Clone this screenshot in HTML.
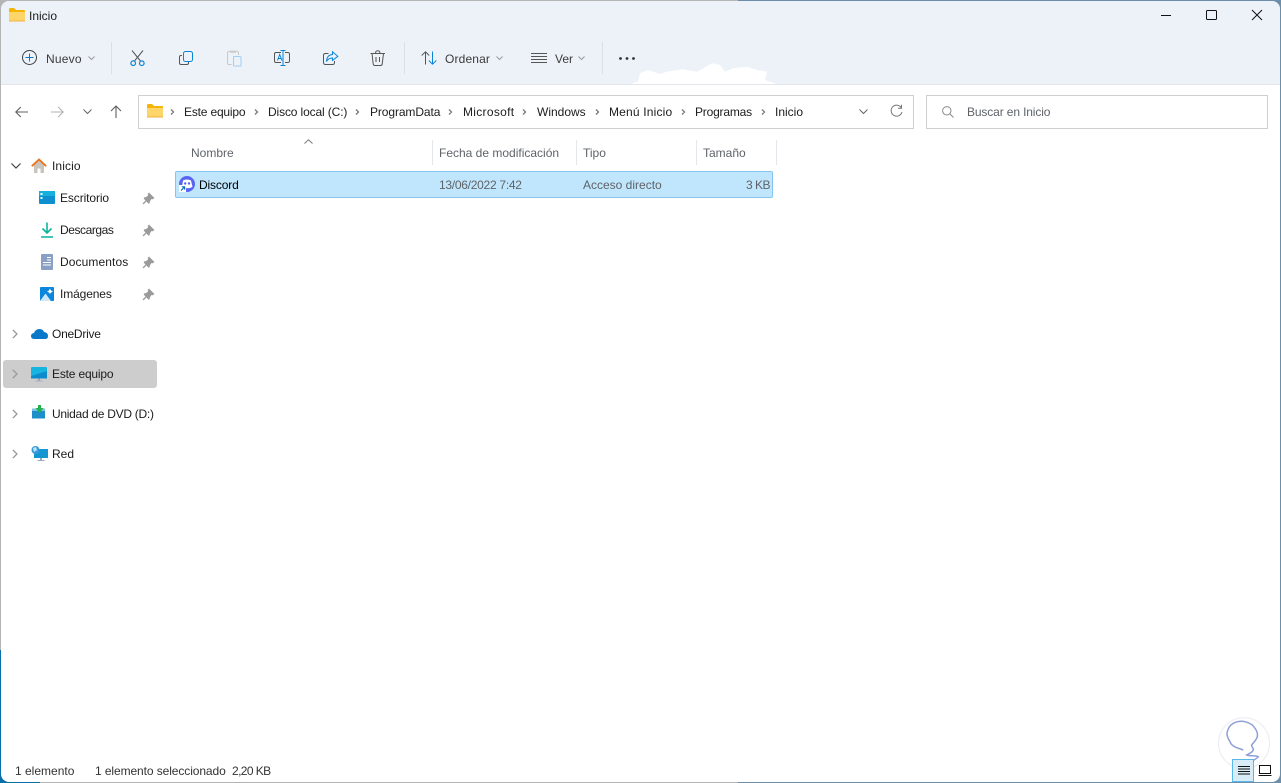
<!DOCTYPE html>
<html lang="es"><head><meta charset="utf-8"><title>Inicio</title>
<style>
html,body{margin:0;padding:0;width:1281px;height:783px;overflow:hidden;background:#0a6ea8}
*{box-sizing:border-box}
#bgtop{position:absolute;left:0;top:0;width:1281px;height:783px;background:linear-gradient(90deg,#b4b4b4 0,#b4b4b4 738px,#6b8fab 738px)}
#bgl{position:absolute;left:0;top:650px;width:40px;height:133px;background:#0a6ea8}
#win{position:absolute;left:1px;top:1px;width:1279px;height:781px;background:#fff;border-radius:8px;overflow:hidden}
#head{position:absolute;left:0;top:0;width:1279px;height:84px;background:#edf2f9;border-bottom:1px solid #e2e5ea}
.t{position:absolute;font:12px/16px "Liberation Sans",sans-serif;color:#1c1c1c;white-space:nowrap}
.g{color:#5f6368}
.s{position:absolute;background:#dcdfe4;width:1px}
svg{position:absolute;overflow:visible}
.box{position:absolute;border:1px solid #cfcfcf;background:#fff;height:34px;top:95px}
.h{position:absolute;width:1px;background:#e3e7eb;top:140px;height:25px}
</style></head><body>
<div id="bgtop"></div><div id="bgl"></div>
<div id="win"></div>
<div id="head" style="left:1px;top:1px;position:absolute;border-radius:8px 8px 0 0"></div>

<!-- title -->
<svg style="left:9px;top:8px" width="16" height="14" viewBox="0 0 16 14"><path d="M0 1.5Q0 0 1.5 0H5L7 2H15Q16 2 16 3V4H0Z" fill="#f5b400"/><path d="M0 4H16V12.5Q16 13.5 15 13.5H1Q0 13.5 0 12.5Z" fill="#fdd568"/><path d="M0 12.5H16V13.5H0Z" fill="#f4b13a"/></svg>
<div class="t" style="left:29px;top:8px">Inicio</div>

<!-- caption buttons -->
<svg style="left:1161px;top:9px" width="110" height="14" fill="none" stroke="#111" stroke-width="1"><path d="M0 6.5H10"/><rect x="45.5" y="1.5" width="10" height="9" rx="1"/><path d="M91 1L101 11M101 1L91 11"/></svg>

<!-- toolbar -->
<svg style="left:22px;top:50px" width="16" height="16" fill="none" stroke="#3c4043"><circle cx="7.5" cy="7.5" r="7"/><path d="M7.5 3.5V11.5M3.5 7.5H11.5" stroke="#0a78c8"/></svg>
<div class="t" style="left:46px;top:51px;color:#3b3b3b;letter-spacing:.2px">Nuevo</div>
<svg style="left:88px;top:56px" width="8" height="5" fill="none" stroke="#9a9a9a"><path d="M.5.5L3.5 3.5L6.5.5"/></svg>
<div class="s" style="left:111px;top:42px;height:32px"></div>
<!-- cut -->
<svg style="left:130px;top:50px" width="16" height="17" fill="none"><path d="M2 0.5L10.5 11M13 0.5L4.5 11" stroke="#555"/><circle cx="3.2" cy="13.2" r="2.3" stroke="#0a84d6" stroke-width="1.2"/><circle cx="11.8" cy="13.2" r="2.3" stroke="#0a84d6" stroke-width="1.2"/></svg>
<!-- copy -->
<svg style="left:179px;top:51px" width="15" height="15" fill="none"><path d="M3 4.5H2Q.5 4.5.5 6V12Q.5 13.5 2 13.5H8Q9.5 13.5 9.5 12V11" stroke="#555"/><rect x="4.5" y="0.5" width="9" height="10" rx="2" stroke="#0a84d6"/></svg>
<!-- paste -->
<svg style="left:227px;top:50px" width="15" height="17" fill="none"><path d="M4.5 14.5H2Q.5 14.5.5 13V3Q.5 1.5 2 1.5H10Q11.5 1.5 11.5 3V5" stroke="#c8c8c8"/><rect x="3" y="0.5" width="6" height="2.5" fill="#d0d0d0"/><rect x="6.5" y="6.5" width="7.5" height="9.5" rx="1" stroke="#9fd0f3"/></svg>
<!-- rename -->
<svg style="left:274px;top:50px" width="17" height="17" fill="none"><path d="M7 2.5H2Q.5 2.5.5 4V11Q.5 12.5 2 12.5H7M11 2.5H13.5Q15.5 2.5 15.5 4V11Q15.5 12.5 13.5 12.5H11" stroke="#555"/><path d="M9 .5V15.5M6.5.5H11.5M6.5 15.5H11.5" stroke="#0a84d6"/><path d="M3.5 10.5L5.7 4.5L8 10.5M4.3 8.5H7.2" stroke="#0a84d6"/></svg>
<!-- share -->
<svg style="left:323px;top:51px" width="16" height="15" fill="none"><path d="M5.5 2.5H2.5Q.5 2.5.5 4.5V11.5Q.5 13.5 2.5 13.5H9.5Q11.5 13.5 11.5 11.5V10" stroke="#555"/><path d="M9.5 .8L14.8 5.3L9.5 9.5V7Q5.5 7 3.5 10.5Q3.8 4 9.5 3.5Z" stroke="#0a84d6"/></svg>
<!-- delete -->
<svg style="left:370px;top:50px" width="16" height="17" fill="none" stroke="#555"><path d="M.5 3.5H15M5.5 3.5Q5.5 .8 7.8 .8Q10 .8 10 3.5M2 3.5L3.2 14Q3.4 15.5 5 15.5H10.5Q12 15.5 12.2 14L13.5 3.5M6 7V12M9.5 7V12"/></svg>
<div class="s" style="left:404px;top:42px;height:32px"></div>
<!-- sort -->
<svg style="left:421px;top:51px" width="17" height="14" fill="none"><path d="M4.5 13.5V.8M.7 4.5L4.5.8L8.2 4.5" stroke="#555"/><path d="M11.5 .5V13M7.8 9.5L11.5 13.2L15.3 9.5" stroke="#0a84d6"/></svg>
<div class="t" style="left:445px;top:51px;color:#3b3b3b;letter-spacing:.15px">Ordenar</div>
<svg style="left:496px;top:56px" width="8" height="5" fill="none" stroke="#9a9a9a"><path d="M.5.5L3.5 3.5L6.5.5"/></svg>
<svg style="left:531px;top:53px" width="16" height="10" fill="none" stroke="#555"><path d="M0 .5H16M0 3.5H16M0 6.5H16M0 9.5H16"/></svg>
<div class="t" style="left:555px;top:51px;color:#3b3b3b">Ver</div>
<svg style="left:578px;top:56px" width="8" height="5" fill="none" stroke="#9a9a9a"><path d="M.5.5L3.5 3.5L6.5.5"/></svg>
<div class="s" style="left:602px;top:42px;height:32px"></div>
<svg style="left:619px;top:57px" width="17" height="4" fill="#333"><circle cx="1.5" cy="1.5" r="1.4"/><circle cx="8" cy="1.5" r="1.4"/><circle cx="14.5" cy="1.5" r="1.4"/></svg>
<!-- white smudge -->
<svg style="left:630px;top:63px" width="147" height="21"><path d="M0 21L8 18.7L10 10L18 7L30 11L37 8.7L53 6.3L67 8.7L82 .3L90 2L95 8.7L103 5.3L117 3.7L127 7L137 8.7L135 17L147 21Z" fill="#fff"/></svg>

<!-- nav -->
<svg style="left:15px;top:106px" width="14" height="12" fill="none" stroke="#5f5f5f" stroke-width="1.1"><path d="M13 6H.8M5.8 1L.8 6L5.8 11"/></svg>
<svg style="left:50px;top:106px" width="14" height="12" fill="none" stroke="#b3b3b3" stroke-width="1.1"><path d="M1 6H13.2M8.2 1L13.2 6L8.2 11"/></svg>
<svg style="left:83px;top:109px" width="9" height="6" fill="none" stroke="#666"><path d="M.5.5L4.5 4.5L8.5.5"/></svg>
<svg style="left:110px;top:105px" width="12" height="13" fill="none" stroke="#5f5f5f" stroke-width="1.1"><path d="M6 13V1M1 6L6 1L11 6"/></svg>

<div class="box" style="left:138px;width:776px"></div>
<svg style="left:147px;top:104px" width="16" height="14" viewBox="0 0 16 14"><path d="M0 1.5Q0 0 1.5 0H5L7 2H15Q16 2 16 3V4H0Z" fill="#f5b400"/><path d="M0 4H16V12.5Q16 13.5 15 13.5H1Q0 13.5 0 12.5Z" fill="#fdd568"/><path d="M0 12.5H16V13.5H0Z" fill="#f4b13a"/></svg>
<svg style="left:170px;top:108px" width="640" height="9" fill="none" stroke="#777" stroke-width="1.3"><path d="M1 1.5L3.5 4L1 6.5M85 1.5L87.5 4L85 6.5M186 1.5L188.5 4L186 6.5M279 1.5L281.5 4L279 6.5M353 1.5L355.5 4L353 6.5M426 1.5L428.5 4L426 6.5M512 1.5L514.5 4L512 6.5M592 1.5L594.5 4L592 6.5"/></svg>
<div class="t" style="left:184px;top:104px;letter-spacing:-.18px">Este equipo</div>
<div class="t" style="left:268px;top:104px;letter-spacing:-.13px">Disco local (C:)</div>
<div class="t" style="left:370px;top:104px;letter-spacing:-.1px">ProgramData</div>
<div class="t" style="left:463px;top:104px;letter-spacing:.3px">Microsoft</div>
<div class="t" style="left:537px;top:104px">Windows</div>
<div class="t" style="left:609px;top:104px;letter-spacing:.18px">Menú Inicio</div>
<div class="t" style="left:695px;top:104px;letter-spacing:-.2px">Programas</div>
<div class="t" style="left:775px;top:104px">Inicio</div>
<svg style="left:859px;top:109px" width="9" height="6" fill="none" stroke="#666"><path d="M.5.5L4.5 4.5L8.5.5"/></svg>
<svg style="left:890px;top:104px" width="13" height="14" fill="none" stroke="#777"><path d="M11.5 4A5.5 5.5 0 1 0 12 8"/><path d="M11.5.8V4.3H8" /></svg>

<div class="box" style="left:926px;width:342px"></div>
<svg style="left:942px;top:106px" width="12" height="12" fill="none" stroke="#8a8a8a"><circle cx="4.8" cy="4.8" r="4.2"/><path d="M8 8L11.5 11.5"/></svg>
<div class="t g" style="left:967px;top:104px;letter-spacing:-.13px">Buscar en Inicio</div>

<!-- sidebar -->
<svg style="left:11px;top:163px" width="10" height="6" fill="none" stroke="#444" stroke-width="1.2"><path d="M.5.5L5 5L9.5.5"/></svg>
<svg style="left:31px;top:158px" width="16" height="16"><path d="M3 7L8 2.5L13 7V15H9.5V10.5H6.5V15H3Z" fill="#c9c4bd"/><path d="M.8 8.2L8 1.5L15.2 8.2" fill="none" stroke="#e8731a" stroke-width="1.8"/></svg>
<div class="t" style="left:52px;top:158px;letter-spacing:.1px">Inicio</div>

<svg style="left:39px;top:191px" width="16" height="13"><rect width="16" height="13" rx="1" fill="#0f8fd0"/><path d="M0 0H16V5H0Z" fill="#16b0dc"/><rect x="1.5" y="2" width="2" height="2" fill="#fff"/><rect x="1.5" y="6" width="2" height="2" fill="#dff"/></svg>
<div class="t" style="left:60px;top:190px;letter-spacing:-.1px">Escritorio</div>
<svg style="left:41px;top:222px" width="12" height="16" fill="none" stroke="#0db39a" stroke-width="1.6"><path d="M6 .5V11M1.5 6.5L6 11L10.5 6.5M0 15H12"/></svg>
<div class="t" style="left:60px;top:222px;letter-spacing:-.44px">Descargas</div>
<svg style="left:41px;top:254px" width="12" height="16"><rect width="12" height="16" rx="1" fill="#8a9fc4"/><path d="M6 3H10V4H6ZM6 5.5H10V6.5H6ZM2 8H10V9H2ZM2 10.5H10V11.5H2Z" fill="#fff"/></svg>
<div class="t" style="left:60px;top:254px;letter-spacing:.1px">Documentos</div>
<svg style="left:40px;top:287px" width="14" height="14"><rect width="14" height="14" rx="1" fill="#0a86dc"/><path d="M0 14L5.5 6.5L11 14Z" fill="#cfe9fb"/><path d="M10 1.5L11 3.5L13 4.5L11 5.5L10 7L9 5.5L7 4.5L9 3.5Z" fill="#fff"/></svg>
<div class="t" style="left:60px;top:286px;letter-spacing:-.12px">Imágenes</div>
<svg style="left:143px;top:193px" width="11" height="108" fill="#9a9a9a" stroke="#9a9a9a" stroke-width=".6"><g id="p"><path d="M6 0L11 5L9.5 6L8.5 5.5L6.5 8.5L6.5 10L5.5 10.2L3.5 8L.5 11L0 10.5L3 7.5L1 5.5L1.5 4.5H3L5.5 2.5L5 1Z"/></g><use href="#p" y="32"/><use href="#p" y="64"/><use href="#p" y="96"/></svg>

<svg style="left:12px;top:329px" width="6" height="10" fill="none" stroke="#9a9a9a" stroke-width="1.3"><path d="M.8.8L5 5L.8 9.2"/></svg>
<svg style="left:31px;top:328px" width="17" height="11"><path d="M3.5 11Q0 11 0 8Q0 5.5 3 5Q4.5 1 8.5 1Q12 1 13 4Q17 4.5 17 8Q17 11 14 11Z" fill="#0a78c8"/></svg>
<div class="t" style="left:52px;top:326px;letter-spacing:-.25px">OneDrive</div>

<div style="position:absolute;left:3px;top:360px;width:154px;height:28px;background:#cdcdcd;border-radius:3px"></div>
<svg style="left:12px;top:369px" width="6" height="10" fill="none" stroke="#9a9a9a" stroke-width="1.3"><path d="M.8.8L5 5L.8 9.2"/></svg>
<svg style="left:31px;top:367px" width="16" height="15"><rect width="16" height="11.5" rx="1" fill="#18b4e0"/><path d="M0 9L16 4V11.5H0Z" fill="#0c8ccc"/><rect x="7" y="11.5" width="2" height="2" fill="#9ab"/><rect x="4.5" y="13.5" width="7" height="1" fill="#aab"/></svg>
<div class="t" style="left:52px;top:366px;letter-spacing:-.18px">Este equipo</div>

<svg style="left:12px;top:409px" width="6" height="10" fill="none" stroke="#9a9a9a" stroke-width="1.3"><path d="M.8.8L5 5L.8 9.2"/></svg>
<svg style="left:32px;top:405px" width="14" height="14"><rect y="3.5" width="13" height="10" fill="#1c8ec8"/><path d="M0 3.5H13V6H0Z" fill="#7cc0e4"/><path d="M6 0H9V3H11.5L7.5 8L3.5 3H6Z" fill="#22b24c"/></svg>
<div class="t" style="left:52px;top:406px;letter-spacing:-.28px">Unidad de DVD (D:)</div>

<svg style="left:12px;top:449px" width="6" height="10" fill="none" stroke="#9a9a9a" stroke-width="1.3"><path d="M.8.8L5 5L.8 9.2"/></svg>
<svg style="left:31px;top:446px" width="17" height="16"><rect x="3" y="3" width="14" height="9" fill="#1496d2"/><circle cx="4.5" cy="4" r="4" fill="#3a9bd8"/><path d="M2 2L5 1L6 4L3 6Z" fill="#bfe4f5"/><rect x="9" y="12" width="2" height="2" fill="#9ab"/><rect x="6.5" y="14" width="7" height="1" fill="#9ab"/></svg>
<div class="t" style="left:52px;top:446px">Red</div>

<!-- columns -->
<div class="t g" style="left:191px;top:145px">Nombre</div>
<svg style="left:304px;top:139px" width="9" height="6" fill="none" stroke="#777"><path d="M.5 4.5L4.5.8L8.5 4.5"/></svg>
<div class="h" style="left:432px"></div>
<div class="t g" style="left:439px;top:145px">Fecha de modificación</div>
<div class="h" style="left:576px"></div>
<div class="t g" style="left:583px;top:145px">Tipo</div>
<div class="h" style="left:696px"></div>
<div class="t g" style="left:703px;top:145px">Tamaño</div>
<div class="h" style="left:776px"></div>

<!-- row -->
<div style="position:absolute;left:175px;top:171px;width:598px;height:27px;background:#c0e6fd;border:1px solid #84c4ee;border-radius:2px"></div>
<svg style="left:178px;top:176px" width="17" height="17"><circle cx="9" cy="8" r="8" fill="#5865f2"/><path d="M5 4.5Q9 2.5 13 4.5L14.5 11Q9 13.5 4 11Z" fill="#fff"/><circle cx="7.2" cy="7.5" r="1.2" fill="#5865f2"/><circle cx="11" cy="7.5" r="1.2" fill="#5865f2"/><rect x="1" y="9" width="7" height="7" fill="#fff"/><path d="M3 14.5L6.3 11.2M3.8 10.8H6.6V13.6" fill="none" stroke="#0a6fc2" stroke-width="1.2"/></svg>
<div class="t" style="left:199px;top:177px;color:#000;letter-spacing:-.15px">Discord</div>
<div class="t g" style="left:439px;top:177px;letter-spacing:-.27px">13/06/2022 7:42</div>
<div class="t g" style="left:583px;top:177px">Acceso directo</div>
<div class="t g" style="left:746px;top:177px;letter-spacing:-.5px">3 KB</div>

<!-- status -->
<div class="t" style="left:15px;top:763px;color:#333">1 elemento</div>
<div class="t" style="left:95px;top:763px;color:#333;letter-spacing:-.09px">1 elemento seleccionado</div>
<div class="t" style="left:232px;top:763px;color:#333;letter-spacing:-.6px">2,20 KB</div>

<!-- watermark & view buttons -->
<svg style="left:1218px;top:717px" width="52" height="52" fill="none"><circle cx="26" cy="26.3" r="25.5" stroke="#e8ecf2"/><path d="M25.3 33C19 31 13 29 12 24.7C9.5 21 8.5 17 9.3 14.7C10.5 10 13 7.5 15.3 6.3C19 4 24 4 27 4.7C32 6 35.5 8.5 37 11.3C39 14 39.8 17 39.3 19.7C38.5 23 35.5 25.5 33.7 28C33 30 36 31 35.3 33C34 35.5 31 37 28.7 38C31 39.5 37 38 40.3 39.7C38 42.5 33 44.5 30.3 46.3" stroke="#8f9fda" stroke-width="1.5"/></svg>
<div style="position:absolute;left:1232px;top:759px;width:22px;height:23px;background:#d8ecf8;border:1px solid #5ab8e6"></div>
<svg style="left:1238px;top:766px" width="38" height="14" fill="none" stroke="#111"><path d="M0 .5H12M0 3H12M0 5.5H12M0 8H12"/><rect x="21.5" y="-.5" width="11" height="8"/><path d="M20.5 9.5H33.5"/></svg>
</body></html>
